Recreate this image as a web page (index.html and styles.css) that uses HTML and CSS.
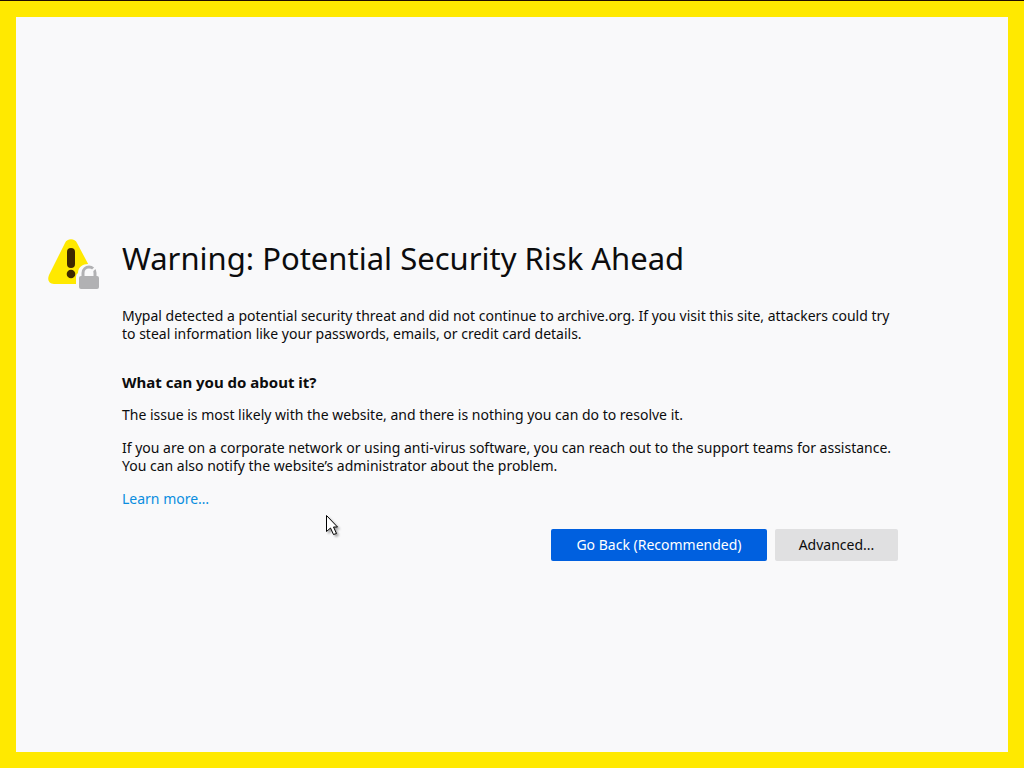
FILE: index.html
```
<!DOCTYPE html>
<html lang="en">

<head>
    <meta charset="utf-8">
    <meta name="viewport" content="width=device-width, initial-scale=1.0">
    <title>Warning: Potential Security Risk Ahead</title>
    <link rel="stylesheet" href="styles.css">
</head>

<body>
    <main class="container">
        <svg class="warning-icon" viewBox="0 0 52 52" aria-hidden="true">
            <path fill="#ffe900" d="M17 4C19-1 27-1 29 4L46 36C48 41 45 45 40 45H6C1 45-1 41 1 36Z" />
            <rect x="19" y="9" width="8" height="20" rx="4" fill="#3e2800" />
            <circle cx="23" cy="35" r="4.300" fill="#3e2800" />
            <path fill="#f9f9fa" d="M28 52V38Q28 35 30 34C30 22 50 22 50 34L52 36V52Z" />
            <rect x="31" y="37" width="20" height="13" rx="2" fill="#b1b1b3" />
            <path fill="none" stroke="#b1b1b3" stroke-width="3" d="M35 38V34C35 26 47 26 47 34V38" />
            <path stroke="#f9f9fa" stroke-width="2" d="M40 36L48 28" />
        </svg>

        <div class="content">
            <h1>Warning: Potential Security Risk Ahead</h1>
            <p class="intro">Mypal detected a potential security threat and did not continue to archive.org. If you visit this site, attackers could try to steal information like your passwords, emails, or credit card details.</p>

            <h2>What can you do about it?</h2>
            <p>The issue is most likely with the website, and there is nothing you can do to resolve it.</p>
            <p>If you are on a corporate network or using anti-virus software, you can reach out to the support teams for assistance. You can also notify the website’s administrator about the problem.</p>
            <p><a href="#">Learn more…</a></p>

            <div class="buttons">
                <button type="button" class="primary">Go Back (Recommended)</button>
                <button type="button">Advanced...</button>
            </div>
        </div>
    </main>

    <svg class="cursor" viewBox="0 0 16 24" aria-hidden="true">
        <path fill="#fff" stroke="#000" d="M1.500 1.500V17.500L5.500 14L8.500 20.500L11.500 19.500L8.500 13H12.500Z" />
    </svg>
</body>

</html>
```
FILE: styles.css
```
* {
    box-sizing: border-box;
}

body {
    display: flex;
    align-items: center;
    min-height: 100vh;
    margin: 0;
    padding: 31px 110px 0 32px;
    border: 16px solid #ffe900;
    border-top-width: 17px;
    background-color: #f9f9fa;
    color: #0c0c0d;
    font-family: Tahoma, "Noto Sans", sans-serif;
    font-size: 14px;
    line-height: 18px;
}

/* thin window edge above the page */
body::before {
    content: "";
    position: absolute;
    top: 0;
    left: 0;
    right: 0;
    height: 1px;
    background-color: #200c00;
}

.container {
    display: flex;
    gap: 22px;
    width: 100%;
    max-width: 850px;
}

.warning-icon {
    flex: none;
    width: 52px;
    height: 52px;
}

.content {
    flex: 1;
}

h1 {
    margin: 0 0 30px;
    font-size: 31px;
    font-weight: 400;
    line-height: 38px;
}

h2 {
    margin: 0;
    font-size: 15px;
    font-weight: 700;
}

p {
    margin: 15px 0;
}

.intro {
    margin: 0 0 30px;
}

a {
    color: #0a8ddf;
    text-decoration: none;
}

a:hover {
    text-decoration: underline;
}

.buttons {
    display: flex;
    justify-content: flex-end;
    gap: 8px;
    margin-top: 21px;
}

button {
    min-width: 123px;
    height: 32px;
    padding: 0 22px;
    border: none;
    border-radius: 2px;
    background-color: #e0e0e1;
    color: #0c0c0d;
    font: inherit;
}

button.primary {
    min-width: 216px;
    background-color: #0060df;
    color: #fff;
}

.cursor {
    position: absolute;
    top: 514px;
    left: 325px;
    width: 16px;
    height: 24px;
    filter: drop-shadow(2px 2px 1px #0005);
}
```
